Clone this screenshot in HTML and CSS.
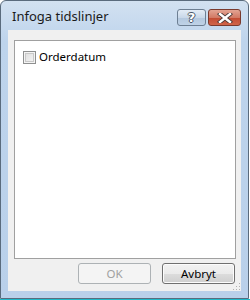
FILE: index.html
```html
<!DOCTYPE html>
<html lang="sv">
<head>
    <meta charset="UTF-8">
    <title>Infoga tidslinjer</title>
    <link rel="stylesheet" href="styles.css">
</head>
<body>
    <!-- dialog window -->
    <div class="window">
        <div class="titlebar">
            <span class="title">Infoga tidslinjer</span>
            <div class="captionButtons">
                <div class="capBtn help"><span>?</span></div>
                <div class="capBtn close">
                    <svg width="16" height="10" viewBox="0 0 16 10">
                        <path d="M3 1 L13 9 M13 1 L3 9" stroke="#4a3a38" stroke-width="4.2" stroke-linecap="square"/>
                        <path d="M3 1 L13 9 M13 1 L3 9" stroke="#ffffff" stroke-width="2.4" stroke-linecap="square"/>
                    </svg>
                </div>
            </div>
        </div>

        <div class="client">
            <div class="panel">
                <label class="item">
                    <span class="checkbox"></span>
                    <span>Orderdatum</span>
                </label>
            </div>
            <div class="footer">
                <button class="btn" disabled>OK</button>
                <button class="btn">Avbryt</button>
            </div>
            <div class="grip"></div>
        </div>
    </div>
    <div class="edge"></div>
</body>
</html>
```

FILE: styles.css
```css
* {
    padding: 0px;
    margin: 0px;
    box-sizing: border-box;
}
body {
    background-color: #ffffff;
    font-family: "Noto Sans", "Open Sans", sans-serif;
    font-size: 11.5px;
    color: #000000;
    width: 250px;
    height: 300px;
    overflow: hidden;
}
.window {
    width: 249px;
    height: 299px;
    border: 1px solid #5a6b7d;
    border-radius: 6px 6px 0 0;
    background: linear-gradient(#d2e1f1, #bed4ec 40px, #b9d0ea);
    display: flex;
    flex-direction: column;
}
.titlebar {
    height: 29px;
    display: flex;
    align-items: flex-start;
}
.title {
    margin: 6px 0 0 11px;
    font-size: 13px;
    color: #1a1a1a;
}
.captionButtons {
    margin: 8px 7px 0 auto;
    display: flex;
    gap: 2px;
}
.capBtn {
    height: 17px;
    border: 1px solid #6d7f93;
    border-radius: 3px;
    display: flex;
    align-items: center;
    justify-content: center;
}
.help {
    width: 29px;
    background: linear-gradient(#e3ecf6, #c9d8e9 50%, #b3c7de 51%, #bfd2e7);
}
.help span {
    font-family: "DejaVu Sans", sans-serif;
    font-weight: bold;
    font-size: 13px;
    line-height: 13px;
    color: #ffffff;
    text-shadow: 1px 0 #4a5566, -1px 0 #4a5566, 0 1px #4a5566, 0 -1px #4a5566;
}
.close {
    width: 33px;
    border-color: #7a3a2e;
    background: linear-gradient(#e3a493, #d27a65 50%, #c24a32 51%, #d0654a);
}
.client {
    margin: 0 7px 7px 7px;
    flex: 1;
    background-color: #f0f0f0;
    display: flex;
    flex-direction: column;
    position: relative;
}
.panel {
    margin: 10px 5px 0 6px;
    height: 219px;
    background-color: #ffffff;
    border: 1px solid #a0a0a0;
    padding: 9px 0 0 8px;
}
.item {
    display: flex;
    align-items: center;
    gap: 3px;
    line-height: 14px;
}
.checkbox {
    width: 13px;
    height: 13px;
    border: 1px solid #8e8f8f;
    background: linear-gradient(135deg, #dcdcdc, #f6f6f6);
    box-shadow: inset 0 0 0 1px #f4f4f4, inset 0 0 0 2px #c8c8c8;
}
.footer {
    margin: 4px 6px 0 0;
    display: flex;
    justify-content: flex-end;
    gap: 11px;
}
.btn {
    width: 73px;
    height: 21px;
    font-family: "Noto Sans", "Open Sans", sans-serif;
    font-size: 11.5px;
    color: #000000;
    border: 1px solid #707070;
    border-radius: 3px;
    background: linear-gradient(#f2f2f2, #ebebeb 50%, #dddddd 51%, #cfcfcf);
    box-shadow: inset 0 0 0 1px #fcfcfc;
}
.btn:disabled {
    color: #a0a0a0;
    border-color: #adb2b5;
    background: #f4f4f4;
    box-shadow: none;
}
.grip {
    position: absolute;
    right: 1px;
    bottom: 1px;
    width: 8px;
    height: 8px;
    background:
        radial-gradient(circle, #b0b0b0 0.8px, transparent 1px) 0 0 / 3px 3px;
    clip-path: polygon(100% 0, 100% 100%, 0 100%);
}
.edge {
    height: 1px;
    background-color: #1fb9c9;
}
```
